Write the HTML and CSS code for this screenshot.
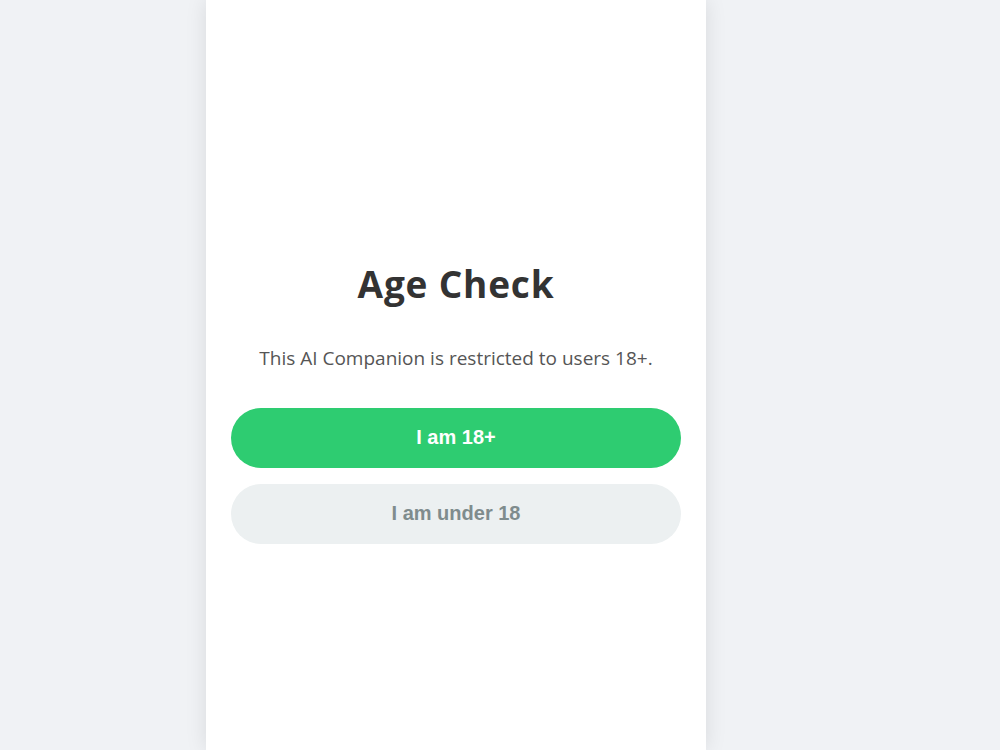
FILE: index.html
```html
<!DOCTYPE html>
<html lang="en">
<head>
  <meta charset="UTF-8">
  <meta name="viewport" content="width=device-width, initial-scale=1.0">
  <title>Age Check</title>
  <link rel="stylesheet" href="styles.css">
</head>
<body>
  <div id="app">
    <div class="age-check">
      <h1>Age Check</h1>
      <p>This AI Companion is restricted to users 18+.</p>
      <button class="btn btn-yes">I am 18+</button>
      <button class="btn btn-no">I am under 18</button>
    </div>
  </div>
</body>
</html>
```

FILE: styles.css
```css
*{
  margin: 0;
  padding: 0;
  box-sizing: border-box;
}

body{
  background: #f0f2f5;
  font-family: "Segoe UI", "Open Sans", "Noto Sans", sans-serif;
}

#app{
  width: 500px;
  height: 100vh;
  margin-left: 206px;
  background: #fff;
  box-shadow: 0 0 20px rgba(0,0,0,0.1);
  display: flex;
  flex-direction: column;
  justify-content: center;
  padding: 56px 25px 0;
}

.age-check{
  display: flex;
  flex-direction: column;
  align-items: center;
}

.age-check h1{
  font-size: 37px;
  font-weight: 700;
  letter-spacing: 0.8px;
  color: #333;
  line-height: 1.2;
  margin-bottom: 38px;
}

.age-check p{
  font-size: 19px;
  color: #555;
  line-height: 1.5;
  margin-bottom: 35px;
}

.btn{
  width: 100%;
  height: 60px;
  border: none;
  border-radius: 30px;
  font-family: "Liberation Sans", Arial, sans-serif;
  font-size: 20px;
  font-weight: bold;
  cursor: pointer;
}

.btn-yes{
  background: #2ecc71;
  color: #fff;
  margin-bottom: 16px;
}

.btn-no{
  background: #ecf0f1;
  color: #7f8c8d;
}
```
